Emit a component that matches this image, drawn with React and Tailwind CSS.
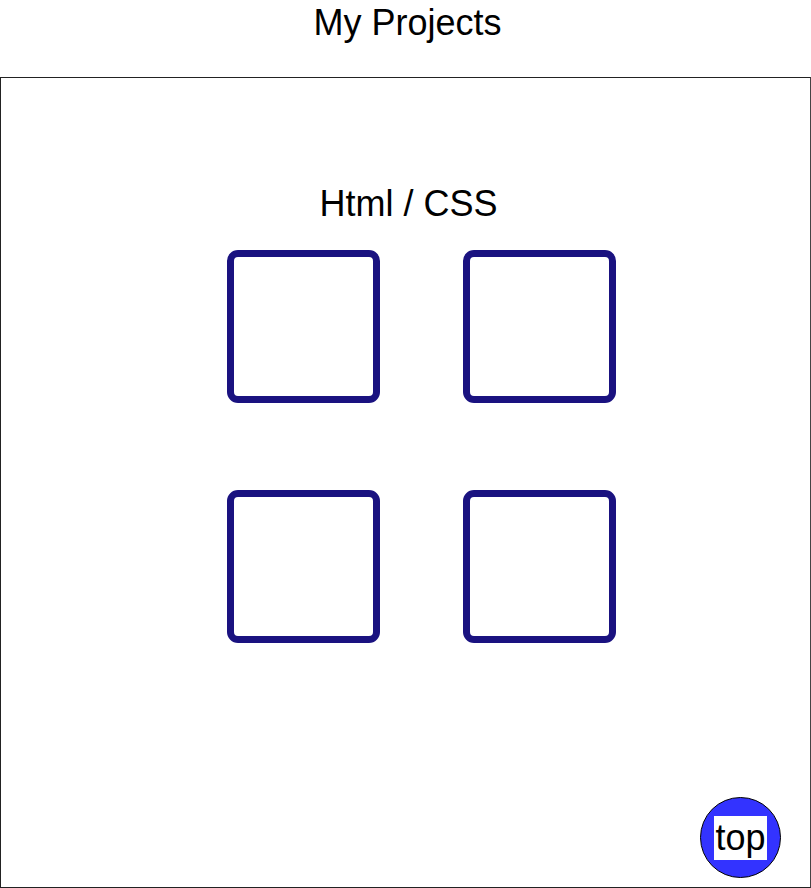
import React from 'react';

const projects = [1, 2, 3, 4];

const App = () => {
  return (
    <div className="w-[811px] h-[888px] bg-white text-black font-['Liberation_Sans',Arial,sans-serif] overflow-hidden">
      <h1 className="pt-[2px] text-[36px] leading-[41px] text-center pl-[4px]">My Projects</h1>
      <section className="relative mt-[34px] w-[811px] h-[811px] border border-[#222] border-r-[#444]">
        <h2 className="pt-[105px] text-[36px] leading-[41px] text-center pl-[6px]">Html / CSS</h2>
        <div className="mt-[26px] ml-[226px] grid grid-cols-[153px_153px] gap-x-[83px] gap-y-[87px]">
          {projects.map((p) => (
            <a
              key={p}
              href="#"
              className="block w-[153px] h-[153px] border-[7px] border-[#1a1280] rounded-[11px]"
            />
          ))}
        </div>
        <a
          href="#"
          className="absolute right-[29px] bottom-[9px] w-[81px] h-[81px] rounded-full bg-[#3333ff] border border-black flex items-center justify-center"
        >
          <span className="bg-white text-[36px] leading-[44px] px-[1px]">top</span>
        </a>
      </section>
    </div>
  );
};

export default App;
